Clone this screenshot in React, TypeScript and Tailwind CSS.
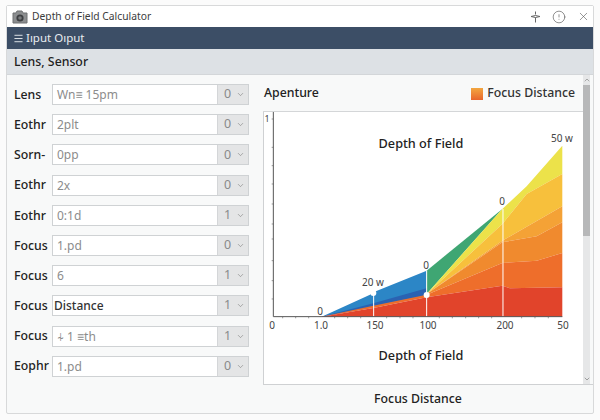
import { ChevronDown, ChevronUp, CircleAlert, Menu, X } from "lucide-react";

const rows = [
  { label: "Lens", value: "Wn≡ 15pm", unit: "0" },
  { label: "Eothr", value: "2plt", unit: "0" },
  { label: "Sorn-", value: "0pp", unit: "0" },
  { label: "Eothr", value: "2x", unit: "0" },
  { label: "Eothr", value: "0:1d", unit: "1" },
  { label: "Focus", value: "1.pd", unit: "0" },
  { label: "Focus", value: "6", unit: "1" },
  { label: "Focus", value: "Distance", unit: "1", dark: true },
  { label: "Focus", value: "⍭ 1 ≡th", unit: "1" },
  { label: "Eophr", value: "1.pd", unit: "0" },
];

const bands = [
  { fill: "#2c86c6", d: "M185 563L330 497L340 490L500 425V500Z" },
  { fill: "#2a62b2", d: "M185 563L340 523L500 478V500L340 535Z" },
  { fill: "#3fa673", d: "M500 425L727 240L500 495Z" },
  { fill: "#ece24a", d: "M500 495L727 240L800 172L907 50V135L800 195L727 285Z" },
  { fill: "#f7c03c", d: "M500 495L727 285L800 195L907 135V232L727 335Z" },
  { fill: "#f4a236", d: "M500 495L727 335L907 232V280L830 322L727 340Z" },
  { fill: "#f08a2e", d: "M500 495L727 340L830 322L907 280V372L830 395L727 402L500 497Z" },
  { fill: "#ee6e2b", d: "M185 563L340 530L500 497L727 402L830 395L907 372V475L750 478L727 470L500 505L340 537Z" },
  { fill: "#e1442b", d: "M185 563L340 537L500 505L727 470L750 478L907 475V563Z" },
];

const xTicks = [68, 107, 146, 224, 263, 302, 380, 420, 459, 538, 577, 617, 656, 695, 785, 825, 865];
const yTicks = [-30, 55, 110, 165, 225, 285, 330, 395, 455, 510];
const xLabels = [
  { x: 8, text: "0" },
  { x: 57, text: "1.0" },
  { x: 111, text: "150" },
  { x: 164, text: "100" },
  { x: 241, text: "200" },
  { x: 299, text: "50" },
];

function Chart() {
  return (
    <svg width="319" height="272" viewBox="0 0 319 272" className="block">
      <g transform="translate(-4 17) scale(0.3333)">
        {bands.map((band) => (
          <path key={band.fill} d={band.d} fill={band.fill} />
        ))}
        <path d="M341 492V563M500 425V563M729 240V563" stroke="#fff" strokeWidth="3" fill="none" />
        <circle cx="340" cy="492" r="9" fill="#fff" />
        <circle cx="500" cy="498" r="9" fill="#fff" />
        <path d="M40 -51V563H907" stroke="#555" strokeWidth="3" fill="none" />
        {xTicks.map((x) => (
          <path key={x} d={`M${x} 563v5`} stroke="#666" strokeWidth="2" />
        ))}
        {yTicks.map((y) => (
          <path key={y} d={`M35 ${y}h5`} stroke="#666" strokeWidth="2" />
        ))}
      </g>
      <g fontFamily="Noto Sans, sans-serif" fontSize="10" fill="#444" textAnchor="middle">
        <text x="3" y="10" fontSize="9">1</text>
        <text x="56" y="203">0</text>
        <text x="109" y="174">20 w</text>
        <text x="162" y="157">0</text>
        <text x="238" y="93">0</text>
        <text x="298" y="30">50 w</text>
        {xLabels.map((label) => (
          <text key={label.x} x={label.x} y="217">
            {label.text}
          </text>
        ))}
      </g>
      <g fontFamily="Noto Sans, sans-serif" fontSize="12.7" fontWeight="500" fill="#222" textAnchor="middle">
        <text x="157" y="36">Depth of Field</text>
        <text x="157" y="248">Depth of Field</text>
      </g>
    </svg>
  );
}

function Field({ label, value, unit, dark }: { label: string; value: string; unit: string; dark?: boolean }) {
  return (
    <div className="flex h-[21px] items-center">
      <div className="w-[38px] overflow-hidden pt-[1px] text-[12.3px] font-medium whitespace-nowrap text-[#222]">{label}</div>
      <div className="flex h-[21px] w-[197px] border border-[#cfd2d4] bg-white">
        <div className={dark ? "flex-1 pl-[1px] text-[12px] leading-[20px] font-medium text-[#333]" : "flex-1 pl-[4px] text-[12px] leading-[20px] text-[#8c8c8c]"}>
          {value}
        </div>
        <div className="flex w-[31px] items-center justify-center gap-[5px] border-l border-[#d4d6d8] bg-[#e4e5e6] pl-[3px] text-[12.5px] text-[#8a8a8a]">
          {unit}
          <ChevronDown size={9} strokeWidth={1.5} className="text-[#777]" />
        </div>
      </div>
    </div>
  );
}

export default function App() {
  return (
    <div className="h-[420px] w-[600px] overflow-hidden bg-[#fbfbfb] pt-[5px] pl-[6px] font-['Noto_Sans',sans-serif]">
      <div className="flex h-[409px] w-[588px] flex-col rounded-[2px] border border-[#d8d9da] bg-[#f8f9f9]">
        <div className="flex h-[21px] items-center bg-white pr-[3px] pl-[5px]">
          <svg width="16" height="14" viewBox="0 0 16 14" className="mr-[4px]">
            <path d="M1 3h3l1-2h5l1 2h4v10H1z" fill="#8b8d8f" stroke="#6f7173" />
            <circle cx="8" cy="8" r="3.6" fill="#3d3f42" />
            <circle cx="8" cy="8" r="1.8" fill="#77797c" />
          </svg>
          <span className="text-[10.3px] text-[#3c3c3c]">Depth of Field Calculator</span>
          <div className="ml-auto flex items-center gap-[11px] text-[#555]">
            <svg width="11" height="12" viewBox="0 0 11 12" fill="none" stroke="#666" strokeWidth="1">
              <path d="M5.5 0.5V3.5M1 5.5L5.5 4.5L10 5.5L5.5 6.5ZM5.5 6.5V11.5" />
            </svg>
            <CircleAlert size={14} strokeWidth={1.1} />
            <X size={13} strokeWidth={1.1} />
          </div>
        </div>
        <div className="flex h-[22px] items-center gap-[2px] bg-[#3c4e66] pl-[6px] text-[11.5px] text-[#e8ecf0]">
          <Menu size={11} strokeWidth={2} />
          <span>Iıput Oıput</span>
        </div>
        <div className="flex h-[26px] items-center border-b border-[#d3d6d9] bg-[#dde1e5] pt-[2px] pl-[7px] text-[12.3px] font-medium text-[#222]">
          Lens, Sensor
        </div>
        <div className="flex flex-1">
          <div className="flex w-[256px] flex-col gap-[9.2px] pt-[9px] pl-[7px]">
            {rows.map((row, i) => (
              <Field key={i} {...row} />
            ))}
          </div>
          <div className="flex flex-1 flex-col">
            <div className="flex h-[310px] border-b border-[#cfd1d3]">
              <div className="flex w-[320px] flex-col">
                <div className="flex h-[38px] items-center border-b border-[#d4d6d8] pt-[1px] pl-[1px]">
                  <span className="text-[12.3px] font-medium text-[#222]">Apenture</span>
                  <span className="ml-auto h-[12px] w-[12px] bg-gradient-to-b from-[#f2a640] to-[#e8652c]" />
                  <span className="mr-[8px] ml-[4px] text-[12.3px] font-medium text-[#333]">Focus Distance</span>
                </div>
                <div className="flex-1 border-l border-[#cfd1d3] bg-white">
                  <Chart />
                </div>
              </div>
              <div className="flex w-[7px] flex-col items-center bg-[#e6e7e8]">
                <ChevronUp size={8} strokeWidth={1.5} className="my-[1px] text-[#666]" />
                <div className="h-[151px] w-full bg-[#b7b8b9]" />
                <ChevronDown size={8} strokeWidth={1.5} className="mt-auto mb-[1px] text-[#555]" />
              </div>
            </div>
            <div className="flex h-[28px] w-[310px] items-center justify-center text-[12.3px] font-medium text-[#222]">
              Focus Distance
            </div>
          </div>
        </div>
      </div>
    </div>
  );
}
